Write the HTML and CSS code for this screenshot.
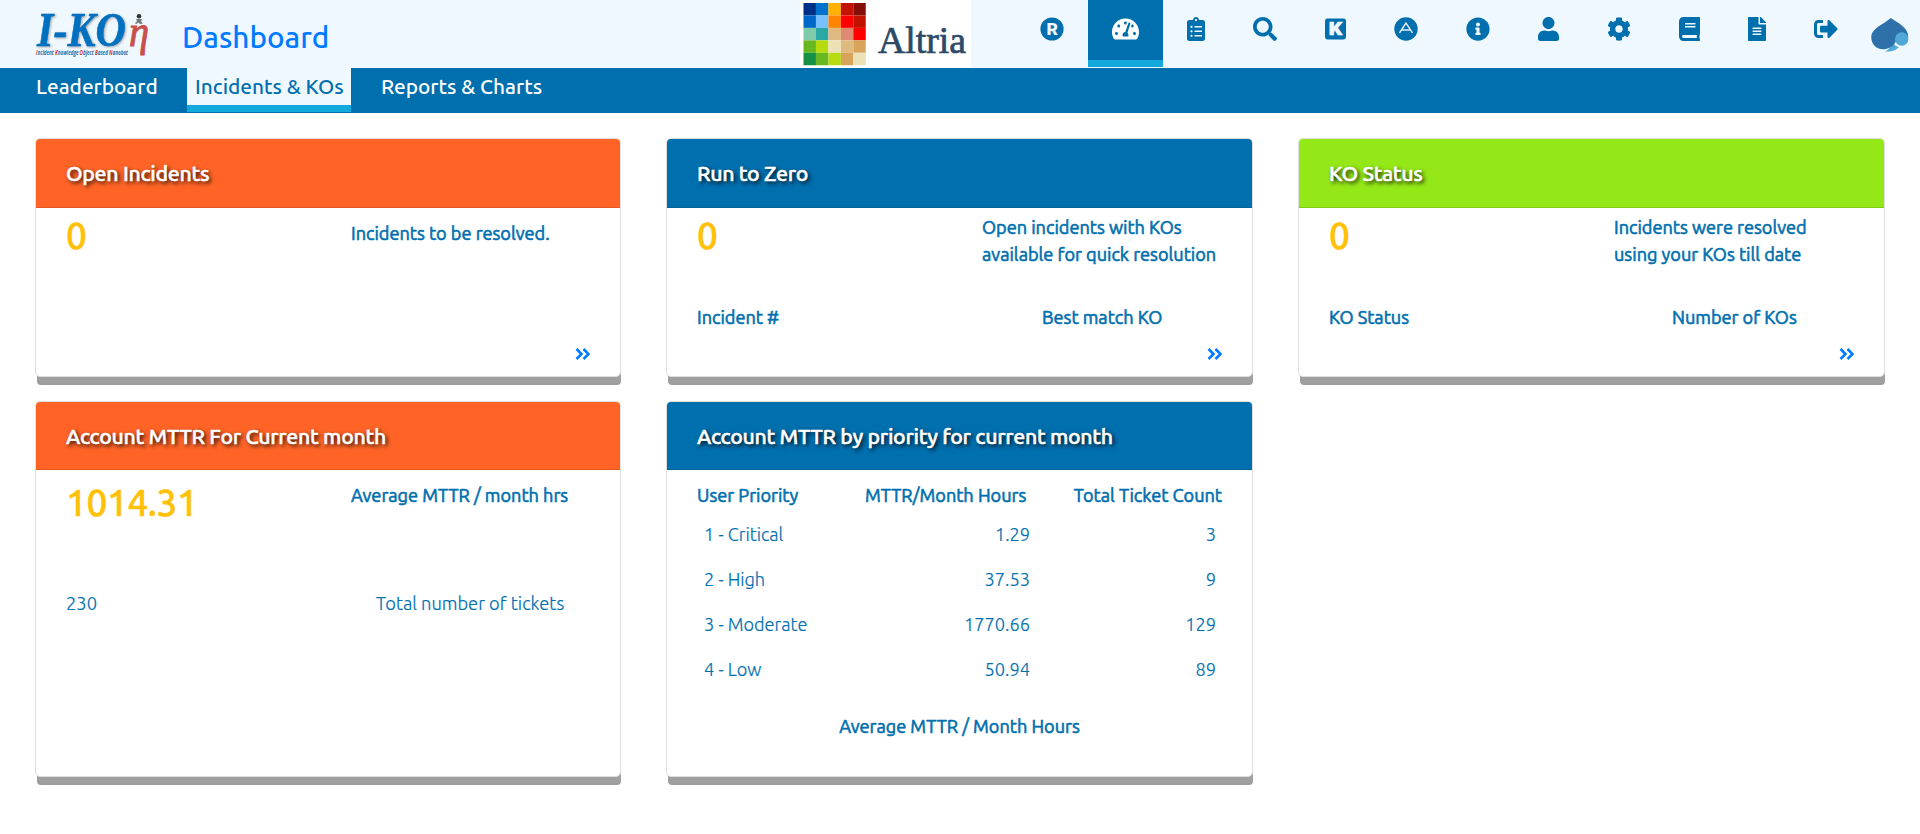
FILE: index.html
```html
<!DOCTYPE html>
<html lang="en">
<head>
<meta charset="utf-8">
<title>Dashboard</title>
<link rel="stylesheet" href="styles.css">
</head>
<body>
<header class="topbar">
  <svg class="brand" width="118" height="50" viewBox="0 0 118 50">
    <text class="brand-word" x="1" y="34.500" textLength="89" lengthAdjust="spacingAndGlyphs">I-KO</text>
    <text class="brand-eta" x="93" y="34.500" textLength="20" lengthAdjust="spacingAndGlyphs">η</text>
    <g fill="#333"><circle cx="103" cy="5.200" r="2.300"/><path d="M100 8h6l-1 2.500 2 2-3 .5-1.500-1.500-2.500 1.500-1-1 2-1.500z" opacity=".65"/></g>
    <text class="brand-tag" x="0" y="43.500" textLength="92" lengthAdjust="spacingAndGlyphs"><tspan class="tag-red">I</tspan>ncident <tspan class="tag-red">K</tspan>nowledge <tspan class="tag-red">O</tspan>bject <tspan class="tag-red">B</tspan>ased <tspan class="tag-red">N</tspan>anobot</text>
  </svg>
  <h1 class="page-title">Dashboard</h1>
  <div class="client">
    <svg width="171" height="68" viewBox="0 0 171 68">
      <g transform="translate(3.500 3) scale(12.450)">
        <path fill="#003087" d="M0 0h1v1H0z"/><path fill="#0072ce" d="M1 0h1v1H1z"/><path fill="#ffb000" d="M2 0h1v1H2z"/><path fill="#c41200" d="M3 0h1v1H3z"/><path fill="#850f08" d="M4 0h1v1H4z"/>
        <path fill="#0068c8" d="M0 1h1v1H0z"/><path fill="#78c0ff" d="M1 1h1v1H1z"/><path fill="#ff8400" d="M2 1h1v1H2z"/><path fill="#ff0000" d="M3 1h1v1H3z"/><path fill="#c41200" d="M4 1h1v1H4z"/>
        <path fill="#80ccaa" d="M0 2h1v1H0z"/><path fill="#2aa8a4" d="M1 2h1v1H1z"/><path fill="#e0b97e" d="M2 2h1v1H2z"/><path fill="#df8a72" d="M3 2h1v1H3z"/><path fill="#ff0000" d="M4 2h1v1H4z"/>
        <path fill="#68b921" d="M0 3h1v1H0z"/><path fill="#b6dc10" d="M1 3h1v1H1z"/><path fill="#ede1b8" d="M2 3h1v1H2z"/><path fill="#e0b97e" d="M3 3h1v1H3z"/><path fill="#d8a45c" d="M4 3h1v1H4z"/>
        <path fill="#159045" d="M0 4h1v1H0z"/><path fill="#68b921" d="M1 4h1v1H1z"/><path fill="#b6dc10" d="M2 4h1v1H2z"/><path fill="#d8a45c" d="M3 4h1v1H3z"/><path fill="#ede1b8" d="M4 4h1v1H4z"/>
      </g>
      <text class="client-name" x="78" y="52.500" textLength="88" lengthAdjust="spacingAndGlyphs">Altria</text>
    </svg>
  </div>
  <nav class="tools">
    <a class="tool"><svg width="24" height="24" viewBox="0 0 24 24"><circle cx="12" cy="12" r="11.600"/><text class="glyph" x="6.600" y="18" textLength="11.500" lengthAdjust="spacingAndGlyphs">R</text></svg></a>
    <a class="tool tool-on"><svg width="27" height="24" viewBox="0 0 576 512"><path d="M288 32C128.940 32 0 160.940 0 320c0 52.800 14.250 102.260 39.060 144.800 5.610 9.620 16.300 15.200 27.440 15.200h443c11.140 0 21.830-5.580 27.440-15.200C561.750 422.260 576 372.800 576 320c0-159.060-128.940-288-288-288zm0 64c14.710 0 26.580 10.130 30.320 23.650-1.110 2.260-2.640 4.230-3.450 6.670l-9.220 27.670c-5.130 3.490-10.970 6.010-17.640 6.010-17.670 0-32-14.330-32-32S270.330 96 288 96zM96 384c-17.670 0-32-14.330-32-32s14.330-32 32-32 32 14.330 32 32-14.330 32-32 32zm48-160c-17.670 0-32-14.330-32-32s14.330-32 32-32 32 14.330 32 32-14.330 32-32 32zm246.770-72.410l-61.330 184C343.130 347.330 352 364.540 352 384c0 11.720-3.380 22.550-8.880 32H232.880c-5.500-9.450-8.880-20.280-8.880-32 0-33.940 26.500-61.430 59.900-63.590l61.340-184.010c4.170-12.560 17.730-19.450 30.360-15.170 12.570 4.190 19.350 17.790 15.170 30.360zm14.660 57.200l15.520-46.550c3.470-1.290 7.130-2.230 11.050-2.230 17.670 0 32 14.330 32 32s-14.330 32-32 32c-11.380-.010-20.890-6.280-26.570-15.220zM480 384c-17.670 0-32-14.330-32-32s14.330-32 32-32 32 14.330 32 32-14.330 32-32 32z"/></svg></a>
    <a class="tool"><svg width="18" height="24" viewBox="0 0 384 512"><path d="M336 64h-80c0-35.300-28.700-64-64-64s-64 28.700-64 64H48C21.500 64 0 85.500 0 112v352c0 26.500 21.500 48 48 48h288c26.500 0 48-21.500 48-48V112c0-26.500-21.500-48-48-48zM96 424c-13.300 0-24-10.700-24-24s10.700-24 24-24 24 10.700 24 24-10.700 24-24 24zm0-96c-13.300 0-24-10.700-24-24s10.700-24 24-24 24 10.700 24 24-10.700 24-24 24zm0-96c-13.300 0-24-10.700-24-24s10.700-24 24-24 24 10.700 24 24-10.700 24-24 24zm96-192c13.300 0 24 10.700 24 24s-10.700 24-24 24-24-10.700-24-24 10.700-24 24-24zm128 368c0 4.400-3.600 8-8 8H168c-4.400 0-8-3.600-8-8v-16c0-4.400 3.600-8 8-8h144c4.400 0 8 3.600 8 8v16zm0-96c0 4.400-3.600 8-8 8H168c-4.400 0-8-3.600-8-8v-16c0-4.400 3.600-8 8-8h144c4.400 0 8 3.600 8 8v16zm0-96c0 4.400-3.600 8-8 8H168c-4.400 0-8-3.600-8-8v-16c0-4.400 3.600-8 8-8h144c4.400 0 8 3.600 8 8v16z"/></svg></a>
    <a class="tool"><svg width="24" height="24" viewBox="0 0 512 512"><path d="M505 442.700L405.300 343c-4.500-4.500-10.600-7-17-7H372c27.600-35.300 44-79.700 44-128C416 93.100 322.900 0 208 0S0 93.100 0 208s93.100 208 208 208c48.300 0 92.700-16.400 128-44v16.300c0 6.400 2.500 12.500 7 17l99.700 99.700c9.400 9.400 24.600 9.400 33.900 0l28.300-28.300c9.400-9.400 9.400-24.600.1-34zM208 336c-70.700 0-128-57.200-128-128 0-70.700 57.200-128 128-128 70.700 0 128 57.200 128 128 0 70.700-57.200 128-128 128z"/></svg></a>
    <a class="tool"><svg width="21" height="24" viewBox="0 0 21 24"><rect y="1.500" width="21" height="21" rx="2.400"/><text class="glyph glyph-k" x="3.800" y="18" textLength="13.400" lengthAdjust="spacingAndGlyphs">K</text></svg></a>
    <a class="tool"><svg width="24" height="24" viewBox="0 0 24 24"><circle cx="12" cy="12" r="11.700"/><path class="line" d="M5.500 15.800 12 6l6.500 9.800M7.600 12.900h8.800"/></svg></a>
    <a class="tool"><svg width="24" height="24" viewBox="0 0 512 512"><path d="M256 8C119.043 8 8 119.083 8 256c0 136.997 111.043 248 248 248s248-111.003 248-248C504 119.083 392.957 8 256 8zm0 110c23.196 0 42 18.804 42 42s-18.804 42-42 42-42-18.804-42-42 18.804-42 42-42zm56 254c0 6.627-5.373 12-12 12h-88c-6.627 0-12-5.373-12-12v-24c0-6.627 5.373-12 12-12h12v-64h-12c-6.627 0-12-5.373-12-12v-24c0-6.627 5.373-12 12-12h64c6.627 0 12 5.373 12 12v100h12c6.627 0 12 5.373 12 12v24z"/></svg></a>
    <a class="tool"><svg width="21" height="24" viewBox="0 0 448 512"><path d="M224 256c70.700 0 128-57.300 128-128S294.700 0 224 0 96 57.300 96 128s57.300 128 128 128zm89.600 32h-16.700c-22.200 10.200-46.900 16-72.900 16s-50.600-5.800-72.900-16h-16.700C60.200 288 0 348.200 0 422.400V464c0 26.500 21.500 48 48 48h352c26.500 0 48-21.500 48-48v-41.600c0-74.200-60.200-134.400-134.400-134.400z"/></svg></a>
    <a class="tool"><svg width="24" height="24" viewBox="0 0 512 512"><path d="M487.400 315.700l-42.600-24.600c4.300-23.200 4.300-47 0-70.200l42.600-24.600c4.900-2.800 7.100-8.600 5.500-14-11.100-35.600-30-67.800-54.700-94.600-3.800-4.100-10-5.100-14.800-2.300L380.800 110c-17.900-15.400-38.500-27.300-60.800-35.100V25.800c0-5.600-3.900-10.500-9.400-11.700-36.700-8.200-74.300-7.800-109.200 0-5.500 1.200-9.400 6.100-9.400 11.700V75c-22.200 7.900-42.800 19.800-60.800 35.100L88.700 85.500c-4.900-2.800-11-1.900-14.800 2.300-24.700 26.700-43.600 58.900-54.700 94.600-1.700 5.400.6 11.200 5.500 14L67.300 221c-4.300 23.200-4.300 47 0 70.200l-42.600 24.600c-4.900 2.800-7.100 8.600-5.500 14 11.100 35.600 30 67.800 54.700 94.600 3.800 4.100 10 5.100 14.800 2.300l42.600-24.600c17.900 15.400 38.500 27.300 60.800 35.100v49.200c0 5.600 3.900 10.500 9.400 11.700 36.700 8.200 74.300 7.800 109.200 0 5.500-1.200 9.400-6.100 9.400-11.700v-49.200c22.200-7.900 42.800-19.800 60.800-35.100l42.600 24.600c4.900 2.800 11 1.900 14.800-2.300 24.700-26.700 43.600-58.900 54.700-94.600 1.500-5.500-.7-11.300-5.600-14.100zM256 336c-44.100 0-80-35.900-80-80s35.900-80 80-80 80 35.900 80 80-35.900 80-80 80z"/></svg></a>
    <a class="tool"><svg width="21" height="24" viewBox="0 0 448 512"><path d="M448 360V24c0-13.300-10.700-24-24-24H96C43 0 0 43 0 96v320c0 53 43 96 96 96h328c13.300 0 24-10.700 24-24v-16c0-7.500-3.500-14.300-8.900-18.700-4.200-15.400-4.200-59.300 0-74.700 5.400-4.300 8.900-11.100 8.900-18.600zM128 134c0-3.300 2.700-6 6-6h212c3.300 0 6 2.700 6 6v20c0 3.300-2.700 6-6 6H134c-3.300 0-6-2.700-6-6v-20zm0 64c0-3.300 2.700-6 6-6h212c3.300 0 6 2.700 6 6v20c0 3.300-2.700 6-6 6H134c-3.300 0-6-2.700-6-6v-20zm253.400 250H96c-17.700 0-32-14.300-32-32 0-17.600 14.400-32 32-32h285.400c-1.900 17.100-1.900 46.900 0 64z"/></svg></a>
    <a class="tool"><svg width="18" height="24" viewBox="0 0 384 512"><path d="M224 136V0H24C10.700 0 0 10.700 0 24v464c0 13.300 10.700 24 24 24h336c13.300 0 24-10.700 24-24V160H248c-13.200 0-24-10.800-24-24zm64 236c0 6.600-5.400 12-12 12H108c-6.600 0-12-5.400-12-12v-8c0-6.600 5.400-12 12-12h168c6.600 0 12 5.400 12 12v8zm0-64c0 6.600-5.400 12-12 12H108c-6.600 0-12-5.400-12-12v-8c0-6.600 5.400-12 12-12h168c6.600 0 12 5.400 12 12v8zm0-72v8c0 6.600-5.400 12-12 12H108c-6.600 0-12-5.400-12-12v-8c0-6.600 5.400-12 12-12h168c6.600 0 12 5.400 12 12zm96-114.100v6.100H256V0h6.100c6.400 0 12.500 2.500 17 7l97.900 98c4.500 4.500 7 10.600 7 16.900z"/></svg></a>
    <a class="tool"><svg width="24" height="24" viewBox="0 0 512 512"><path d="M497 273L329 441c-15 15-41 4.500-41-17v-96H152c-13.300 0-24-10.700-24-24v-96c0-13.300 10.700-24 24-24h136V88c0-21.400 25.900-32 41-17l168 168c9.300 9.400 9.300 24.600 0 34zM192 436v-40c0-6.600-5.400-12-12-12H96c-17.700 0-32-14.300-32-32V160c0-17.700 14.300-32 32-32h84c6.600 0 12-5.400 12-12V76c0-6.600-5.400-12-12-12H96c-53 0-96 43-96 96v192c0 53 43 96 96 96h84c6.600 0 12-5.400 12-12z"/></svg></a>
  </nav>
  <svg class="spade" width="38" height="36" viewBox="0 0 38 36">
    <path fill="#4fa8d8" d="M22 25c1 3 3 4.500 6 5-4 4-8 5-14 4.500 4-2 6-4 8-9.500z"/>
    <path fill="#2d70aa" d="M19.700 1C27 6 37 10 37.300 20c-2 4-9 1-12.800 5C22 30 17 32.300 12 32.300 5 32.300.3 27 .3 20.500.3 11 12 8 19.700 1z"/>
    <circle cx="30.700" cy="22" r="6.700" fill="#4fa8d8"/>
  </svg>
</header>
<nav class="tabs">
  <a class="tab"><span class="t-lead">Leaderboard</span></a>
  <a class="tab tab-on"><span class="t-inc">Incidents &amp; KOs</span></a>
  <a class="tab"><span class="t-rep">Reports &amp; Charts</span></a>
</nav>
<main class="board">
  <section class="card">
    <h2 class="card-head orange">Open Incidents</h2>
    <div class="card-body">
      <div class="summary"><div class="figure">0</div><p class="caption single">Incidents to be resolved.</p></div>
      <a class="more"><svg width="15" height="12" viewBox="0 0 15 12"><path d="m1.500 1 5 5-5 5M8.500 1l5 5-5 5"/></svg></a>
    </div>
  </section>
  <section class="card">
    <h2 class="card-head blue">Run to Zero</h2>
    <div class="card-body">
      <div class="summary"><div class="figure">0</div><p class="caption">Open incidents with KOs<br>available for quick resolution</p></div>
      <div class="pair"><span>Incident #</span><span>Best match KO</span></div>
      <a class="more"><svg width="15" height="12" viewBox="0 0 15 12"><path d="m1.500 1 5 5-5 5M8.500 1l5 5-5 5"/></svg></a>
    </div>
  </section>
  <section class="card">
    <h2 class="card-head green">KO Status</h2>
    <div class="card-body">
      <div class="summary"><div class="figure">0</div><p class="caption">Incidents were resolved<br>using your KOs till date</p></div>
      <div class="pair"><span>KO Status</span><span class="pair-n">Number of KOs</span></div>
      <a class="more"><svg width="15" height="12" viewBox="0 0 15 12"><path d="m1.500 1 5 5-5 5M8.500 1l5 5-5 5"/></svg></a>
    </div>
  </section>
  <section class="card tall">
    <h2 class="card-head orange">Account MTTR For Current month</h2>
    <div class="card-body">
      <div class="summary mttr"><div class="figure">1014.31</div><p class="caption">Average MTTR / month hrs</p></div>
      <div class="tickets"><span>230</span><span class="tickets-label">Total number of tickets</span></div>
    </div>
  </section>
  <section class="card tall">
    <h2 class="card-head blue">Account MTTR by priority for current month</h2>
    <div class="card-body">
      <div class="grid-head"><span>User Priority</span><span class="h-mttr">MTTR/Month Hours</span><span>Total Ticket Count</span></div>
      <div class="grid-row"><span>1 - Critical</span><span class="num">1.29</span><span class="num">3</span></div>
      <div class="grid-row"><span>2 - High</span><span class="num">37.53</span><span class="num">9</span></div>
      <div class="grid-row"><span>3 - Moderate</span><span class="num">1770.66</span><span class="num">129</span></div>
      <div class="grid-row"><span>4 - Low</span><span class="num">50.94</span><span class="num">89</span></div>
      <p class="grid-foot">Average MTTR / Month Hours</p>
    </div>
  </section>
</main>
</body>
</html>
```
FILE: styles.css
```css
* { box-sizing: border-box; }
body {
  margin: 0;
  background: #fff;
  color: #006fae;
  font-family: Ubuntu, "Noto Sans", "Open Sans", sans-serif;
  font-size: 18.150px;
  line-height: 27px;
}
h1, h2, p { margin: 0; }
svg { display: block; }

.topbar { display: flex; height: 68px; background: #f0f8ff; }
.brand { margin: 11px 0 0 36px; flex: none; overflow: visible; }
.brand-word { font: italic bold 48px "Liberation Serif", serif; fill: #0070c0; stroke: #0070c0; stroke-width: .5px; filter: drop-shadow(1px 1.500px 1px rgba(0,0,0,.35)); }
.brand-eta { font: italic 44px "Liberation Serif", serif; fill: #c94f4c; stroke: #c94f4c; stroke-width: 1px; }
.brand-tag { font: italic bold 6.500px "Open Sans", sans-serif; fill: #1f6ea8; }
.tag-red { fill: #d0302c; }
.page-title {
  width: 618px; margin: 16px 0 0 28px; flex: none;
  font-size: 29.700px; line-height: 42px; font-weight: 500; color: #007bff;
}
.client { width: 171px; height: 68px; background: #fff; flex: none; }
.client-name { font: 38px "Liberation Serif", serif; fill: #2c4a66; stroke: #2c4a66; stroke-width: .7px; }

.tools { display: flex; margin-left: 45px; }
.tool { display: block; height: 67px; padding: 17px 24px 0; fill: #006fae; }
.tool-on { background: #006fae; border-bottom: 7px solid #14a9dd; fill: #fff; }
.glyph { font: 900 17px Roboto, sans-serif; fill: #f0f8ff; }
.glyph-k { font-size: 18px; stroke: #f0f8ff; stroke-width: .6px; }
.line { fill: none; stroke: #e2eff8; stroke-width: 1.500px; }
.spade { margin: 17px 0 0 9px; flex: none; filter: blur(.4px); }

.tabs { display: flex; height: 45px; padding-left: 28px; background: #006fae; color: #fff; font-size: 20.800px; font-weight: 500; }
.tab { height: 44px; padding: 5px 8px 0; margin-right: 22px; line-height: 28px; white-space: nowrap; }
.tab span { display: block; }
.tab-on { background: #f0f8ff; color: #006fae; border-bottom: 7px solid #14a9dd; }
.t-lead { width: 121px; }
.t-inc { width: 148px; }

.board {
  display: grid; grid-template-columns: 586px 587px 587px; column-gap: 45px; row-gap: 24px;
  grid-template-rows: 239px 376px; padding: 25px 35px 57px;
}
.card {
  display: flex; flex-direction: column;
  background: #fff; border: 1px solid #dfdfdf; border-radius: 5px;
  box-shadow: 1px 9px 0 -1px #9e9e9e;
}
.card-head {
  height: 69px; flex: none; padding: 20px 30px 0; border-bottom: 1px solid rgba(0,0,0,.125);
  border-radius: 4px 4px 0 0; color: #fff; font-size: 21.300px; line-height: 28px; font-weight: 500;
  letter-spacing: -.3px; -webkit-text-stroke: .5px #fff;
  text-shadow: 2px 2px 4px #000; white-space: nowrap;
}
.tall .card-head { height: 68px; }
.orange { background-color: #ff6426; }
.blue { background-color: #006fae; }
.green { background-color: #94e817; }
.card-body { flex: 1; display: flex; flex-direction: column; padding: 0 30px; white-space: nowrap; }
.summary { display: flex; height: 89px; }
.figure { width: 285px; padding-top: 3px; color: #ffc107; font-size: 37px; line-height: 50px; font-weight: 500; letter-spacing: -.4px; -webkit-text-stroke: .5px #ffc107; }
.caption { padding-top: 6px; }
.caption.single { padding-top: 12px; }
.caption, .pair, .grid-head, .grid-foot { -webkit-text-stroke: .6px #006fae; }
.pair { display: flex; height: 27px; padding-top: 7px; }
.pair span:first-child { width: 345px; }
.pair-n { margin-left: -2px; }
.more { margin: auto 0 16px auto; fill: none; stroke: #007bff; stroke-width: 2.600px; }
.mttr .figure { padding-top: 8px; }
.mttr .caption { padding-top: 12px; }
.tickets { display: flex; padding-top: 31px; font-weight: 300; font-size: 18.350px; -webkit-text-stroke: .2px #006fae; }
.tickets-label { margin-left: 279px; }
.grid-head { display: flex; height: 43px; padding-top: 12px; }
.grid-head span:first-child { width: 168px; }
.h-mttr { width: 209px; }
.grid-row {
  display: grid; grid-template-columns: 150px 176px 186px; height: 45px; padding: 8px 0 0 7px;
  font-weight: 300; font-size: 18.200px; -webkit-text-stroke: .2px #006fae;
}
.num { text-align: right; }
.grid-foot { padding-top: 20px; text-align: center; }
```
